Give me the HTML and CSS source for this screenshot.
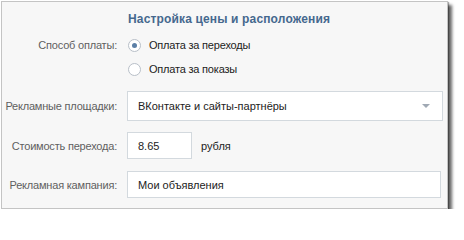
FILE: index.html
```html
<!DOCTYPE html>
<html lang="ru">
<head>
<meta charset="utf-8">
<link rel="stylesheet" href="styles.css">
</head>
<body>
<div class="panel">
  <div class="title">Настройка цены и расположения</div>
  <div class="row row-radio">
    <div class="label">Способ оплаты:</div>
    <div class="control radios">
      <label class="radio"><span class="dot on"></span>Оплата за переходы</label>
      <label class="radio"><span class="dot"></span>Оплата за показы</label>
    </div>
  </div>
  <div class="row row-select">
    <div class="label">Рекламные площадки:</div>
    <div class="control">
      <div class="select">ВКонтакте и сайты-партнёры<span class="arrow"></span></div>
    </div>
  </div>
  <div class="row row-cost">
    <div class="label">Стоимость перехода:</div>
    <div class="control inline">
      <div class="input short">8.65</div>
      <span class="unit">рубля</span>
    </div>
  </div>
  <div class="row row-camp">
    <div class="label">Рекламная кампания:</div>
    <div class="control">
      <div class="input wide">Мои объявления</div>
    </div>
  </div>
</div>
</body>
</html>
```
FILE: styles.css
```css
html, body {
  margin: 0;
  padding: 0;
  background: #ffffff;
}
body {
  font-family: "Liberation Sans", Tahoma, sans-serif;
  font-size: 11px;
  color: #222;
  padding: 1px 0 0 1px;
}
.panel {
  box-sizing: border-box;
  width: 447px;
  height: 208px;
  background: #f7f7f7;
  border: 1px solid #c4c4c4;
  box-shadow: 4px 4px 3px rgba(0, 0, 0, 0.6), 1px 1px 1px rgba(0, 0, 0, 0.3);
  padding: 9px 0 0 0;
}
.title {
  margin-left: 126px;
  font-weight: bold;
  font-size: 12px;
  letter-spacing: 0.15px;
  color: #45688e;
  line-height: 16px;
}
.row {
  display: grid;
  grid-template-columns: 115px 1fr;
  column-gap: 10px;
  align-items: center;
}
.label {
  text-align: right;
  color: #5f5f5f;
  white-space: nowrap;
  letter-spacing: -0.2px;
}
.row-radio {
  align-items: start;
  margin-top: 10px;
}
.row-radio .label {
  line-height: 16px;
}
.radios {
  display: flex;
  flex-direction: column;
  row-gap: 8px;
  padding-left: 1px;
}
.radio {
  display: flex;
  align-items: center;
  line-height: 16px;
  color: #222;
  white-space: nowrap;
  letter-spacing: -0.2px;
}
.dot {
  box-sizing: border-box;
  width: 13px;
  height: 13px;
  border-radius: 50%;
  border: 1px solid #b8bfc8;
  background: #fff;
  margin-right: 8px;
  position: relative;
}
.dot.on::after {
  content: "";
  position: absolute;
  left: 3px;
  top: 3px;
  width: 5px;
  height: 5px;
  border-radius: 50%;
  background: #5b7fa6;
}
.row-select {
  margin-top: 14px;
}
.select {
  box-sizing: border-box;
  width: 316px;
  height: 30px;
  background: #fff;
  border: 1px solid #d3d9de;
  padding: 0 10px;
  display: flex;
  align-items: center;
  justify-content: space-between;
  color: #222;
  white-space: nowrap;
}
.arrow {
  width: 0;
  height: 0;
  border-left: 4px solid transparent;
  border-right: 4px solid transparent;
  border-top: 4px solid #a0a9b4;
  margin-right: 2px;
}
.row-cost {
  margin-top: 11px;
}
.inline {
  display: flex;
  align-items: center;
  column-gap: 9px;
}
.input {
  box-sizing: border-box;
  height: 27px;
  background: #fff;
  border: 1px solid #d3d9de;
  padding: 0 10px;
  display: flex;
  align-items: center;
  color: #222;
  white-space: nowrap;
}
.input.short {
  width: 65px;
}
.input.wide {
  width: 314px;
}
.unit {
  color: #222;
}
.row-camp {
  margin-top: 12px;
}
```
